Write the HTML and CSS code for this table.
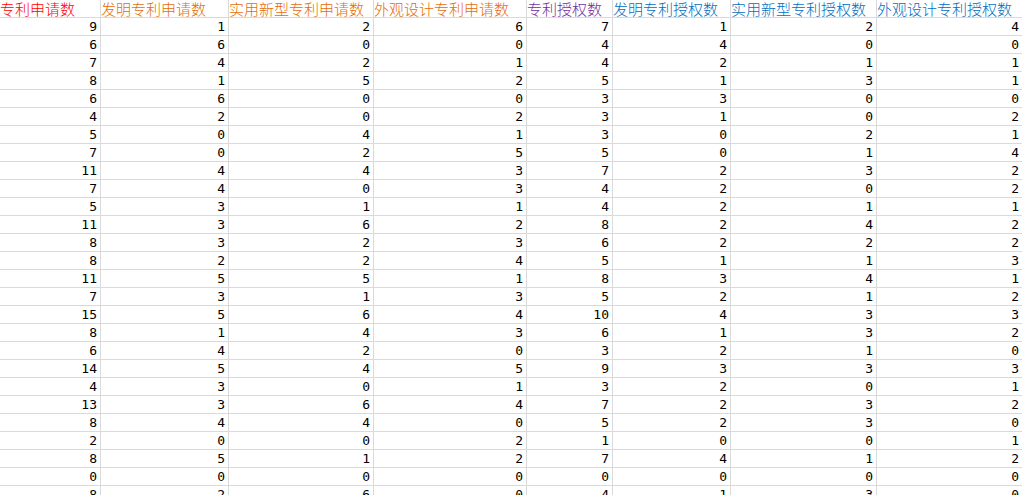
FILE: index.html
```html
<!DOCTYPE html>
<html lang="zh">
<head>
<meta charset="utf-8">
<link rel="stylesheet" href="styles.css">
</head>
<body>
<div class="sheet" id="sheet">
  <div class="cell head red">专利申请数</div>
  <div class="cell head orange">发明专利申请数</div>
  <div class="cell head orange">实用新型专利申请数</div>
  <div class="cell head orange">外观设计专利申请数</div>
  <div class="cell head purple">专利授权数</div>
  <div class="cell head blue">发明专利授权数</div>
  <div class="cell head blue">实用新型专利授权数</div>
  <div class="cell head blue">外观设计专利授权数</div>
</div>
<script>
var rows = [
[9,1,2,6,7,1,2,4],[6,6,0,0,4,4,0,0],[7,4,2,1,4,2,1,1],[8,1,5,2,5,1,3,1],
[6,6,0,0,3,3,0,0],[4,2,0,2,3,1,0,2],[5,0,4,1,3,0,2,1],[7,0,2,5,5,0,1,4],
[11,4,4,3,7,2,3,2],[7,4,0,3,4,2,0,2],[5,3,1,1,4,2,1,1],[11,3,6,2,8,2,4,2],
[8,3,2,3,6,2,2,2],[8,2,2,4,5,1,1,3],[11,5,5,1,8,3,4,1],[7,3,1,3,5,2,1,2],
[15,5,6,4,10,4,3,3],[8,1,4,3,6,1,3,2],[6,4,2,0,3,2,1,0],[14,5,4,5,9,3,3,3],
[4,3,0,1,3,2,0,1],[13,3,6,4,7,2,3,2],[8,4,4,0,5,2,3,0],[2,0,0,2,1,0,0,1],
[8,5,1,2,7,4,1,2],[0,0,0,0,0,0,0,0],[8,2,6,0,4,1,3,0]
];
var s = document.getElementById('sheet');
rows.forEach(function(r){
  r.forEach(function(v){
    var d = document.createElement('div');
    d.className = 'cell num';
    d.textContent = v;
    s.appendChild(d);
  });
});
</script>
</body>
</html>
```
FILE: styles.css
```css
html, body {
  margin: 0;
  padding: 0;
  background: #ffffff;
  overflow: hidden;
}
.sheet {
  display: grid;
  grid-template-columns: 101px 128px 145px 153px 86px 118px 146px 146px;
  grid-auto-rows: 18px;
  width: 1023px;
}
.cell {
  box-sizing: border-box;
  border-right: 1px solid #dadada;
  border-bottom: 1px solid #dadada;
  height: 18px;
  white-space: nowrap;
}
.head {
  font-family: "Noto Sans CJK SC", "Noto Sans", sans-serif;
  font-size: 15px;
  font-weight: 300;
  line-height: 17px;
}
.red { color: #ff0000; }
.orange { color: #e46c0a; }
.purple { color: #7030a0; }
.blue { color: #0070c0; }
.num {
  font-family: "DejaVu Sans Mono", "Liberation Mono", monospace;
  font-size: 13px;
  text-align: right;
  padding-right: 3px;
  color: #000000;
  line-height: 18px;
}
```
